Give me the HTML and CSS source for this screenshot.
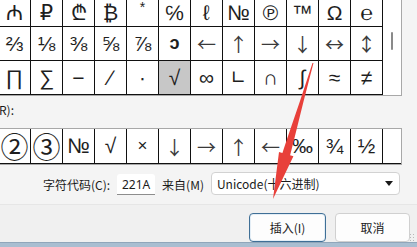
FILE: index.html
```html
<!DOCTYPE html>
<html lang="zh">
<head>
<meta charset="utf-8">
<title>符号</title>
<link rel="stylesheet" href="styles.css">
</head>
<body>
<div class="dialog">
  <div class="charpanel">
    <div class="grid">
      <div class="cell r1">₼</div><div class="cell r1">₽</div><div class="cell r1">₾</div><div class="cell r1">₿</div><div class="cell"><span class="ast">*</span></div><div class="cell r1">℅</div><div class="cell r1">ℓ</div><div class="cell r1">№</div><div class="cell r1">℗</div><div class="cell r1">™</div><div class="cell r1">Ω</div><div class="cell r1">℮</div>
      <div class="cell">⅔</div><div class="cell">⅛</div><div class="cell">⅜</div><div class="cell">⅝</div><div class="cell">⅞</div><div class="cell bold">ↄ</div><div class="cell arr">←</div><div class="cell arr">↑</div><div class="cell arr">→</div><div class="cell arr">↓</div><div class="cell arr">↔</div><div class="cell arr">↕</div>
      <div class="cell">∏</div><div class="cell">∑</div><div class="cell">−</div><div class="cell">∕</div><div class="cell">∙</div><div class="cell sel">√</div><div class="cell">∞</div><div class="cell dv">∟</div><div class="cell">∩</div><div class="cell">∫</div><div class="cell">≈</div><div class="cell">≠</div>
    </div>
    <div class="scroll"><div class="thumb"></div></div>
  </div>

  <div class="recent-label">R):</div>

  <div class="recent">
    <div class="rcell circ">②</div><div class="rcell circ">③</div><div class="rcell">№</div><div class="rcell">√</div><div class="rcell small">×</div><div class="rcell arr">↓</div><div class="rcell arr">→</div><div class="rcell arr">↑</div><div class="rcell arr">←</div><div class="rcell">‰</div><div class="rcell">¾</div><div class="rcell">½</div>
    <div class="rfill"></div>
  </div>

  <div class="form-row">
    <span class="lbl">字符代码(C):</span>
    <div class="code">221A</div>
    <span class="lbl">来自(M)</span>
    <div class="select"><span>Unicode(十六进制)</span><span class="caret"></span></div>
  </div>

  <div class="footer">
    <button class="btn primary">插入(I)</button>
    <button class="btn">取消</button>
    <div class="grip"></div>
  </div>
  <div class="desk"></div>

  <svg class="arrow" width="417" height="247" viewBox="0 0 417 247">
    <polygon points="313.5,63 303.4,101.9 293.8,140.7 290.1,155.2 293.4,156.2 273,199 279,152 282.4,153 287.1,138.7 300,100.9 312.5,63" fill="#e8403a"/>
  </svg>
</div>
</body>
</html>
```

FILE: styles.css
```css
html, body {
  margin: 0;
  padding: 0;
}
body {
  font-family: "Noto Sans CJK SC", "Noto Sans", sans-serif;
  font-size: 12px;
  color: #1b1b1b;
  background: #f3f3f3;
}
.dialog {
  position: relative;
  width: 417px;
  height: 247px;
  overflow: hidden;
  background: #f4f4f4;
  display: flex;
  flex-direction: column;
}
.charpanel {
  display: flex;
  align-self: flex-start;
  margin-left: -1px;
  margin-top: -7px;
  background: #fff;
  border-right: 1px solid #a8a8a8;
  border-bottom: 1px solid #a8a8a8;
}
.grid {
  display: grid;
  grid-template-columns: repeat(12, 32px);
  grid-auto-rows: 34px;
}
.cell {
  box-sizing: border-box;
  border-right: 1px solid #111;
  border-bottom: 1px solid #111;
  display: flex;
  align-items: center;
  justify-content: center;
  font-family: "Liberation Sans", "DejaVu Sans", sans-serif;
  font-size: 21px;
  line-height: 21px;
  color: #1e1e1e;
  overflow: hidden;
}
.cell.r1 {
  padding-top: 5px;
}
.cell.sel {
  background: #c7c7c7;
}
.cell.bold {
  font-weight: bold;
  font-size: 18px;
}
.cell.dv {
  font-family: "DejaVu Sans", sans-serif;
  font-size: 19px;
  color: #1e1e1e;
}
.arr {
  font-family: "Noto Sans CJK SC", sans-serif;
  font-size: 19px;
  color: #3a3a3a;
}
.ast {
  align-self: flex-start;
  font-size: 14px;
  line-height: 14px;
  margin-top: 7px;
}
.scroll {
  width: 18px;
  position: relative;
}
.thumb {
  margin: 39px 0 0 8px;
  width: 2px;
  height: 18px;
  background: #8a8a8a;
  border-radius: 1px;
}
.recent-label {
  margin: 5px 0 0 -1px;
  height: 17px;
  line-height: 17px;
  font-size: 12px;
}
.recent {
  display: flex;
  align-self: flex-start;
  margin-top: 10px;
  margin-left: -2px;
  border: 1px solid #a8a8a8;
  background: #fff;
}
.rcell {
  box-sizing: border-box;
  width: 32px;
  height: 35px;
  border-right: 1px solid #111;
  border-bottom: 1px solid #111;
  display: flex;
  align-items: center;
  justify-content: center;
  font-family: "Liberation Sans", "DejaVu Sans", sans-serif;
  font-size: 21px;
  color: #1e1e1e;
}
.rcell.circ {
  font-family: "Noto Sans CJK SC", sans-serif;
  font-size: 28px;
}
.rcell.small {
  font-size: 17px;
}
.rcell.arr {
  font-family: "Noto Sans CJK SC", sans-serif;
  font-size: 19px;
  color: #3a3a3a;
}
.rfill {
  width: 18px;
  border-bottom: 1px solid #111;
  box-sizing: border-box;
}
.form-row {
  display: flex;
  align-items: center;
  gap: 7px;
  margin-top: 8px;
  padding-left: 43px;
  height: 23px;
}
.lbl {
  font-size: 12px;
  white-space: nowrap;
}
.code {
  box-sizing: border-box;
  width: 38px;
  height: 21px;
  background: #fff;
  border-bottom: 1px solid #8d8d8d;
  border-radius: 3px 3px 0 0;
  font-family: "Noto Sans", sans-serif;
  font-size: 12px;
  display: flex;
  align-items: center;
  justify-content: center;
}
.select {
  box-sizing: border-box;
  width: 189px;
  height: 23px;
  margin-top: -2px;
  background: #fff;
  border: 1px solid #d2d2d2;
  border-radius: 4px;
  display: flex;
  align-items: center;
  justify-content: space-between;
  padding: 0 6px 0 5px;
  font-size: 12px;
}
.caret {
  width: 0;
  height: 0;
  border-left: 4px solid transparent;
  border-right: 4px solid transparent;
  border-top: 5px solid #1a1a1a;
}
.footer {
  position: relative;
  margin-top: 8px;
  border-top: 1px solid #e6e6e6;
  background: #f0f0f0;
  flex: 1;
  display: flex;
  justify-content: flex-end;
  align-items: flex-start;
  gap: 9px;
  padding: 8px 7px 0 0;
}
.btn {
  box-sizing: border-box;
  height: 29px;
  width: 75px;
  background: #fdfdfd;
  border: 1px solid #d0d0d0;
  border-radius: 4px;
  font-family: "Noto Sans CJK SC", sans-serif;
  font-size: 12px;
  color: #1b1b1b;
  padding: 0;
}
.btn.primary {
  width: 77px;
  border: 1px solid #3f6f96;
  box-shadow: inset 0 0 0 1px #e4eef6;
}
.grip {
  position: absolute;
  right: 1px;
  bottom: 1px;
  width: 7px;
  height: 8px;
  background-image: radial-gradient(circle, #b8b8b8 0.8px, transparent 1px);
  background-size: 3px 3px;
}
.desk {
  height: 4px;
  background: #a9bed1;
  border-top: 1px solid #90a6ba;
}
.arrow {
  position: absolute;
  left: 0;
  top: 0;
  pointer-events: none;
}
```
